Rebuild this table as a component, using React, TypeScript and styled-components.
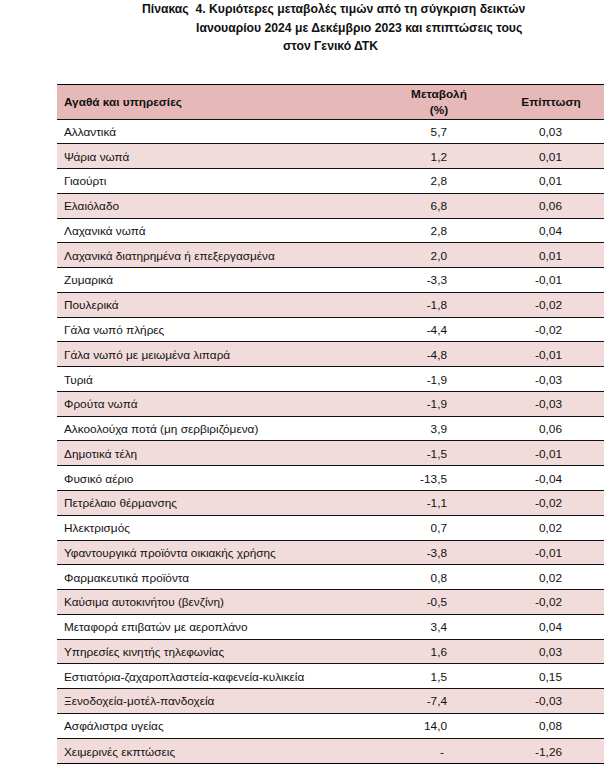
import React from "react";
import styled, { createGlobalStyle } from "styled-components";

const Global = createGlobalStyle`
  html, body { margin: 0; padding: 0; background: #fff; }
  body { font-family: "Liberation Sans", Arial, sans-serif; color: #111; }
`;

const Page = styled.div`
  width: 610px;
  height: 781px;
  overflow: hidden;
  position: relative;
`;

const Title = styled.div`
  font-weight: bold;
  font-size: 12.2px;
  line-height: 18.5px;
  color: #111;
  padding-top: 0;
`;

const TitleLine = styled.div<{ $indent: number }>`
  padding-left: ${(p) => p.$indent}px;
  white-space: pre;
`;

const Table = styled.div`
  margin: 28px 6px 0 57px;
  border-top: 1.5px solid #000;
  border-bottom: 1.5px solid #000;
`;

const Row = styled.div<{ $bg: string; $h: number; $last?: boolean }>`
  display: grid;
  grid-template-columns: 323px 118px 1fr;
  align-items: center;
  height: ${(p) => p.$h}px;
  box-sizing: border-box;
  background: ${(p) => p.$bg};
  border-bottom: ${(p) => (p.$last ? "none" : "1px solid #111")};
  font-size: 11.8px;
  padding-top: 1px;
`;

const Label = styled.div<{ $bold?: boolean }>`
  padding-left: 7px;
  font-weight: ${(p) => (p.$bold ? "bold" : "normal")};
  white-space: nowrap;
`;

const Num = styled.div<{ $pr: number }>`
  text-align: right;
  padding-right: ${(p) => p.$pr}px;
`;

const HeadCell = styled.div`
  text-align: center;
  font-weight: bold;
  line-height: 16px;
`;

const rows: [string, string, string][] = [
  ["Αλλαντικά", "5,7", "0,03"],
  ["Ψάρια νωπά", "1,2", "0,01"],
  ["Γιαούρτι", "2,8", "0,01"],
  ["Ελαιόλαδο", "6,8", "0,06"],
  ["Λαχανικά νωπά", "2,8", "0,04"],
  ["Λαχανικά διατηρημένα ή επεξεργασμένα", "2,0", "0,01"],
  ["Ζυμαρικά", "-3,3", "-0,01"],
  ["Πουλερικά", "-1,8", "-0,02"],
  ["Γάλα νωπό πλήρες", "-4,4", "-0,02"],
  ["Γάλα νωπό με μειωμένα λιπαρά", "-4,8", "-0,01"],
  ["Τυριά", "-1,9", "-0,03"],
  ["Φρούτα νωπά", "-1,9", "-0,03"],
  ["Αλκοολούχα ποτά (μη σερβιριζόμενα)", "3,9", "0,06"],
  ["Δημοτικά τέλη", "-1,5", "-0,01"],
  ["Φυσικό αέριο", "-13,5", "-0,04"],
  ["Πετρέλαιο θέρμανσης", "-1,1", "-0,02"],
  ["Ηλεκτρισμός", "0,7", "0,02"],
  ["Υφαντουργικά προϊόντα οικιακής χρήσης", "-3,8", "-0,01"],
  ["Φαρμακευτικά προϊόντα", "0,8", "0,02"],
  ["Καύσιμα αυτοκινήτου (βενζίνη)", "-0,5", "-0,02"],
  ["Μεταφορά επιβατών με αεροπλάνο", "3,4", "0,04"],
  ["Υπηρεσίες κινητής τηλεφωνίας", "1,6", "0,03"],
  ["Εστιατόρια-ζαχαροπλαστεία-καφενεία-κυλικεία", "1,5", "0,15"],
  ["Ξενοδοχεία-μοτέλ-πανδοχεία", "-7,4", "-0,03"],
  ["Ασφάλιστρα υγείας", "14,0", "0,08"],
  ["Χειμερινές εκπτώσεις", "-", "-1,26"],
];

export default function App() {
  return (
    <Page>
      <Global />
      <Title>
        <TitleLine $indent={142}>{"Πίνακας  4. Κυριότερες μεταβολές τιμών από τη σύγκριση δεικτών"}</TitleLine>
        <TitleLine $indent={196}>Ιανουαρίου 2024 με Δεκέμβριο 2023 και επιπτώσεις τους</TitleLine>
        <TitleLine $indent={283}>στον Γενικό ΔΤΚ</TitleLine>
      </Title>
      <Table>
        <Row $bg="#e6b8b7" $h={35}>
          <Label $bold>Αγαθά και υπηρεσίες</Label>
          <HeadCell>
            Μεταβολή
            <br />
            (%)
          </HeadCell>
          <HeadCell>Επίπτωση</HeadCell>
        </Row>
        {rows.map((r, i) => (
          <Row key={i} $bg={i % 2 === 1 ? "#f2dcdb" : "#ffffff"} $h={24.77} $last={i === rows.length - 1}>
            <Label>{r[0]}</Label>
            <Num $pr={r[1] === "-" ? 54 : 51}>{r[1]}</Num>
            <Num $pr={42}>{r[2]}</Num>
          </Row>
        ))}
      </Table>
    </Page>
  );
}
